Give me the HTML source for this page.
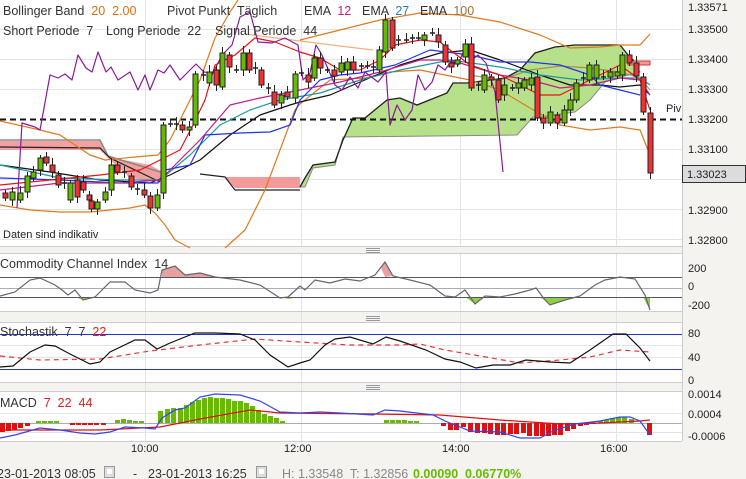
<!DOCTYPE html>
<html><head><meta charset="utf-8"><style>
html,body{margin:0;padding:0;background:#f4f3ef;width:746px;height:479px;overflow:hidden}
svg{display:block;font-family:"Liberation Sans",sans-serif}
text{white-space:pre}
</style></head><body>
<svg id="s" width="746" height="479" xmlns="http://www.w3.org/2000/svg" xml:space="preserve">
<rect x="0" y="0" width="746" height="479" fill="#f4f3ef"/>
<rect x="0" y="0" width="682" height="246" fill="#fff"/>
<rect x="0" y="254" width="682" height="57" fill="#fff"/>
<rect x="0" y="323" width="682" height="59" fill="#fff"/>
<rect x="0" y="392" width="682" height="49" fill="#fff"/>
<g stroke="#e4e4e4" stroke-width="1">
<line x1="0" y1="29.5" x2="682" y2="29.5"/><line x1="0" y1="59.5" x2="682" y2="59.5"/><line x1="0" y1="89.5" x2="682" y2="89.5"/><line x1="0" y1="149.5" x2="682" y2="149.5"/><line x1="0" y1="179.5" x2="682" y2="179.5"/><line x1="0" y1="209.5" x2="682" y2="209.5"/><line x1="0" y1="239.5" x2="682" y2="239.5"/>
<line x1="145.5" y1="0" x2="145.5" y2="246"/><line x1="301.5" y1="0" x2="301.5" y2="246"/><line x1="460.5" y1="0" x2="460.5" y2="246"/><line x1="616.5" y1="0" x2="616.5" y2="246"/>
<line x1="145.5" y1="254" x2="145.5" y2="441"/><line x1="301.5" y1="254" x2="301.5" y2="441"/><line x1="460.5" y1="254" x2="460.5" y2="441"/><line x1="616.5" y1="254" x2="616.5" y2="441"/>
<line x1="0" y1="345.5" x2="682" y2="345.5"/><line x1="0" y1="357.5" x2="682" y2="357.5"/><line x1="0" y1="413.5" x2="682" y2="413.5"/><line x1="0" y1="432.5" x2="682" y2="432.5"/>
</g>
<g stroke="#ccc"><line x1="0" y1="246.5" x2="682" y2="246.5"/><line x1="0" y1="253.5" x2="682" y2="253.5"/><line x1="0" y1="311.5" x2="682" y2="311.5"/><line x1="0" y1="322.5" x2="682" y2="322.5"/><line x1="0" y1="382.5" x2="682" y2="382.5"/><line x1="0" y1="391.5" x2="682" y2="391.5"/><line x1="0" y1="441.5" x2="682" y2="441.5"/><line x1="682.5" y1="0" x2="682.5" y2="441"/></g>
<g stroke="#999" stroke-width="1"><path d="M366 248.5h14M366 250.5h14M366 252.5h14M366 316.5h14M366 318.5h14M366 320.5h14M366 385.5h14M366 387.5h14M366 389.5h14"/></g>
<!-- clouds -->
<path d="M0 141 L100 141 L108 157 L150 165 L163 172 L163 182 L130 178 L108 158 L100 150 L0 150 Z" fill="#f4a0a0"/>
<path d="M225 177 L300 177 L300 188 L235 188 Z" fill="#f39a9a"/>
<path d="M0 140 L100 140 L108 156 L160 172" fill="none" stroke="#888" stroke-width="1.5"/>
<path d="M0 147 L100 148 L110 158 L160 182" fill="none" stroke="#222" stroke-width="1.2"/>
<path d="M200 174 L225 177 L235 190 L300 190" fill="none" stroke="#222" stroke-width="1.2"/>
<path d="M300 187 L305 178 L313 165 L335 162 L343 140 L353 118 L365 118 L387 100 L400 98 L417 105 L447 93 L453 83 L467 83 L490 80 L505 78 L520 70 L535 53 L555 47 L575 45 L600 45 L620 45 L628 55 L640 72 L628 75 L605 82 L590 100 L575 112 L540 117 L533 117 L517 135 L343 137 L335 165 L313 168 L305 187 Z" fill="#b7e08a" stroke="#888" stroke-width="1"/>
<path d="M300 187 L305 178 L313 165 L335 162 L343 140 L353 118 L365 118 L387 100 L400 98 L417 105 L447 93 L453 83 L467 83 L490 80 L505 78 L520 70 L535 53 L555 47 L575 45 L600 45 L620 45 L628 55 L635 62" fill="none" stroke="#222" stroke-width="1.3"/>
<line x1="0" y1="119.5" x2="682" y2="119.5" stroke="#111" stroke-width="2" stroke-dasharray="6,4"/>
<g fill="none" stroke-width="1.2" stroke-linejoin="round">
<polyline stroke="#e07a20" points="0,121 40,130 60,135 90,155 105,160 135,157 158,155 170,140 190,100 200,80 215,38 230,12 238,0"/>
<polyline stroke="#f0b080" points="245,34 300,41 340,46 373,50"/>
<polyline stroke="#e07a20" points="300,40 340,30 380,20 420,13 460,15 500,22 540,35 570,48 600,47 620,45 640,45 650,34"/>
<polyline stroke="#e07a20" points="0,205 30,210 60,212 90,212 110,210 130,208 145,205 155,213 165,225 175,240 190,248"/>
<polyline stroke="#e07a20" points="225,248 245,230 265,190 280,150 295,110 300,104 330,80 365,78 390,72 420,70 470,80 500,90 530,108 560,125 590,130 620,127 640,130 650,155"/>
<polyline stroke="#a07030" opacity=".7" points="470,75 500,80 530,70 560,66 590,68 620,72 640,78 650,90"/>
<polyline stroke="#111" points="0,165 50,172 100,180 150,183 170,175 200,160 230,135 260,115 290,105 300,102 330,95 360,82 400,65 440,53 470,50 500,60 540,75 570,85 600,85 620,87 640,85 650,95"/>
<polyline stroke="#1a9aa0" points="0,165 60,178 120,180 160,180 190,155 220,125 250,110 280,100 320,93 360,80 400,70 450,60 500,67 540,75 580,80 620,78 640,78 650,85"/>
<polyline stroke="#2233ee" points="0,178 60,180 120,183 158,183 165,170 190,165 205,135 240,133 270,132 290,125 300,100 320,80 340,75 360,73 395,65 430,50 470,55 500,62 530,62 560,65 590,75 600,85 620,90 640,95"/>
<polyline stroke="#c0208a" points="0,190 60,183 120,183 160,180 200,140 230,105 260,98 300,90 340,82 380,72 420,60 440,60 460,63 500,75 530,80 560,88 590,85 620,78 640,80 650,95"/>
<polyline stroke="#ee1111" points="0,185 50,180 100,175 140,170 160,160 180,150 193,125 205,100 215,65 235,55 255,38 275,42 300,52 320,58 340,70 360,70 380,60 395,45 420,40 440,42 450,50 470,65 500,75 520,85 540,95 560,95 580,85 600,75 620,65 640,80 650,110"/>
<polyline stroke="#8a1a9a" points="17,208 22,123 35,127 40,130 50,75 58,78 65,74 72,80 78,55 86,68 92,72 98,52 106,72 111,67 118,80 130,72 138,90 145,75 150,90 158,70 164,73 170,65 180,80 190,70 196,64 204,72 213,73 222,55 232,45 240,17 250,12 258,42 272,43 285,38 298,45 303,80 310,73 316,45 322,55 335,85 342,90 350,77 358,88 365,72 378,82 386,72 388,100 390,125 397,105 405,120 412,110 418,75 425,90 432,82 438,65 445,70 452,60 458,65 466,45 472,60 478,55 486,63 495,92 503,172"/>
</g>
<rect x="628" y="61" width="22" height="4" fill="#f29a9a" stroke="#d33" stroke-width="1"/>
<g id="candles"></g>
<!-- CCI -->
<path d="M162 277 L162 270 L175 266 L185 275 L200 273 L215 277Z M385 277 L381 268 L385 262 L393 276Z" fill="#e8a0a0"/>
<path d="M75 297 L83 300 L95 297Z M280 297 L288 299 L300 297Z M445 297 L455 297 L465 297 L475 304 L485 297Z M538 297 L545 300 L550 305 L565 300 L580 297Z M643 297 L650 310 L650 297Z" fill="#8fd04a"/>
<line x1="0" y1="277.5" x2="682" y2="277.5" stroke="#556" stroke-width="1"/>
<line x1="0" y1="288.5" x2="682" y2="288.5" stroke="#aab" stroke-width="1"/>
<line x1="0" y1="297.5" x2="682" y2="297.5" stroke="#556" stroke-width="1"/>
<polyline fill="none" stroke="#666" stroke-width="1.2" points="0,296 15,292 30,280 40,278 55,285 62,290 68,295 75,290 83,300 95,297 110,282 125,282 135,290 150,293 158,290 162,270 175,266 185,275 200,273 215,277 240,280 260,285 280,298 288,297 300,286 305,290 315,280 330,283 345,279 360,281 375,275 385,262 393,276 410,280 430,285 445,296 455,297 465,290 475,304 485,296 500,297 515,294 530,290 536,288 545,300 550,305 565,300 580,296 595,285 605,280 620,277 635,279 645,295 650,310"/>
<!-- Stoch -->
<line x1="0" y1="334.5" x2="682" y2="334.5" stroke="#2233dd"/>
<line x1="0" y1="369.5" x2="682" y2="369.5" stroke="#2233dd"/>
<polyline fill="none" stroke="#ee3333" stroke-width="1.2" stroke-dasharray="5,4" points="0,356 40,360 100,359 150,351 200,345 255,339 300,342 350,345 400,345 420,344 445,350 480,356 520,363 560,360 590,357 620,350 650,352"/>
<polyline fill="none" stroke="#111" stroke-width="1.2" points="0,367 13,366 30,352 45,345 55,346 70,354 90,364 100,362 110,352 135,340 145,340 157,349 170,343 195,333 215,333 240,334 255,340 270,355 288,367 300,363 310,360 325,345 335,339 350,337 373,344 386,337 400,341 426,350 445,359 460,362 476,368 493,365 510,365 526,360 550,362 570,363 590,350 613,334 626,334 640,348 650,361"/>
<!-- MACD -->
<line x1="0" y1="423.5" x2="682" y2="423.5" stroke="#aab"/>
<g id="macd"></g>
<polyline fill="none" stroke="#dd1111" stroke-width="1.3" points="0,430 100,430 160,427 200,419 250,410 280,413 373,414 440,415 500,420 560,424 600,423 640,421 650,420"/>
<polyline fill="none" stroke="#3344ee" stroke-width="1.2" points="0,438 15,435 40,428 60,430 80,433 95,434 110,432 125,427 145,428 155,429 162,418 175,410 185,408 200,397 215,394 240,395 260,401 280,412 300,413 320,412 340,413 373,415 385,410 400,411 433,415 445,421 470,431 500,432 520,438 540,438 555,430 575,424 600,421 620,417 630,417 640,421 650,435"/>
<!-- text -->
<g font-size="12.5" fill="#333">
<text x="3" y="15">Bollinger Band  <tspan fill="#e07010">20</tspan>  <tspan fill="#e07010">2.00</tspan></text>
<text x="167" y="15">Pivot Punkt  Täglich</text>
<text x="304" y="15">EMA  <tspan fill="#c0208a">12</tspan></text>
<text x="362" y="15">EMA  <tspan fill="#1a8a9a">27</tspan></text>
<text x="420" y="15">EMA  <tspan fill="#a07030">100</tspan></text>
<text x="3" y="35">Short Periode  7</text>
<text x="106" y="35">Long Periode  22</text>
<text x="215" y="35">Signal Periode  44</text>
<text x="0" y="268">Commodity Channel Index  14</text>
<text x="0" y="336">Stochastik  7  7  <tspan fill="#e02020">22</tspan></text>
<text x="0" y="407">MACD  <tspan fill="#e02020">7  22  44</tspan></text>
</g>
<text x="3" y="238" font-size="11" fill="#222">Daten sind indikativ</text>
<text x="666" y="112" font-size="11" fill="#222">Piv</text>
<g font-size="11" fill="#222">
<text x="688" y="11">1.33571</text><text x="688" y="33">1.33500</text><text x="688" y="63">1.33400</text><text x="688" y="93">1.33300</text><text x="688" y="123">1.33200</text><text x="688" y="153">1.33100</text><text x="688" y="214">1.32900</text><text x="688" y="244">1.32800</text>
<text x="688" y="272">200</text><text x="688" y="290">0</text><text x="688" y="309">-200</text>
<text x="688" y="337">80</text><text x="688" y="361">40</text><text x="688" y="384">0</text>
<text x="688" y="398">0.0014</text><text x="688" y="418">0.0004</text><text x="688" y="440">-0.0006</text>
<text x="131" y="452">10:00</text><text x="284" y="452">12:00</text><text x="442" y="452">14:00</text><text x="600" y="452">16:00</text>
</g>
<rect x="682.5" y="165.5" width="63" height="17" fill="#dcdcdc" stroke="#333"/>
<text x="687" y="178" font-size="11" fill="#222">1.33023</text>
<g font-size="12.5">
<text x="-3" y="478" fill="#333">23-01-2013 08:05</text>
<rect x="104.5" y="466.5" width="10" height="11" fill="#ddd" stroke="#999"/><rect x="107" y="469" width="5" height="5" fill="#fff"/>
<text x="133" y="478" fill="#333">-</text>
<text x="148" y="478" fill="#333">23-01-2013 16:25</text>
<rect x="256.5" y="466.5" width="10" height="11" fill="#ddd" stroke="#999"/><rect x="259" y="469" width="5" height="5" fill="#fff"/>
<text x="282" y="478" fill="#888">H: 1.33548  T: 1.32856</text>
<text x="413" y="478" fill="#66bb00" font-weight="bold">0.00090</text>
<text x="465" y="478" fill="#66bb00" font-weight="bold">0.06770%</text>
</g>
</svg>
<script>
var C=[[5,193,198],[12,200,192],[20,200,193],[27,192,176],[33,178,172],[40,170,158],[46,157,163],[52,165,172],[58,175,185],[64,183,183],[70,200,183],[77,180,197],[83,182,190],[89,195,200],[91,201,209],[97,209,202],[105,200,192],[111,190,165],[117,165,172],[124,172,172],[131,176,187],[137,189,189],[144,190,195],[150,196,208],[157,208,195],[163,193,125],[170,124,124],[176,124,124],[182,125,130],[189,130,127],[195,125,74],[203,75,75],[209,83,72],[216,70,85],[222,87,53],[229,55,67],[236,70,70],[243,70,53],[249,53,70],[255,68,68],[261,70,85],[268,88,88],[274,92,105],[281,103,95],[287,92,97],[295,98,74],[301,73,73],[308,75,82],[314,78,58],[320,58,68],[327,70,70],[334,70,76],[341,72,63],[347,70,62],[353,62,70],[361,66,66],[367,66,66],[373,67,67],[379,70,50],[385,52,20],[392,20,48],[398,40,40],[406,40,40],[412,38,38],[418,38,38],[424,40,35],[432,33,33],[438,35,42],[445,45,62],[451,63,67],[457,64,60],[465,57,44],[471,44,88],[478,85,85],[484,90,75],[491,77,80],[498,80,100],[504,95,85],[512,88,88],[518,88,83],[524,88,80],[531,85,78],[537,77,118],[543,118,123],[550,123,112],[557,115,123],[564,123,110],[570,110,100],[576,100,83],[583,78,78],[589,80,65],[596,78,65],[603,77,77],[610,77,72],[617,76,72],[622,75,55],[629,55,63],[636,63,76],[643,77,112],[650,113,173]];
var g=document.getElementById("candles"),h="";
C.forEach(function(c,i){var x=c[0],o=c[1],cl=c[2],t=Math.min(o,cl),b=Math.max(o,cl);var up=cl<o;var hi=t-3-(i*7%5),lo=b+3+(i*3%6);
h+='<line x1="'+(x+.5)+'" y1="'+hi+'" x2="'+(x+.5)+'" y2="'+lo+'" stroke="#222" stroke-width="1"/>';
if(b-t<1.5)h+='<line x1="'+(x-2)+'" y1="'+t+'" x2="'+(x+3)+'" y2="'+t+'" stroke="#222" stroke-width="1.5"/>';
else h+='<rect x="'+(x-2)+'" y="'+t+'" width="5" height="'+(b-t)+'" fill="'+(up?'#66bb00':'#ee3333')+'" stroke="#222" stroke-width="1"/>';});
g.innerHTML=h;
var m=document.getElementById("macd"),H=[];
function bar(x,v){var y=423;H.push('<rect x="'+(x-2)+'" y="'+(v<0?y+v:y)+'" width="5" height="'+Math.abs(v)+'" fill="'+(v<0?'#66bb00':'#dd1111')+'"/>');}
var d=[[2,9],[8,8],[14,7],[20,5],[27,3],[38,-2],[44,-2],[50,-2],[56,-2],[72,2],[78,2],[84,2],[90,2],[96,2],[103,2],[117,-3],[123,-4],[129,-3],[135,-2],[141,-2],[160,-12],[167,-14],[173,-15],[180,-15],[186,-18],[192,-21],[198,-23],[204,-25],[210,-26],[216,-25],[222,-25],[228,-24],[234,-22],[240,-22],[246,-20],[252,-17],[258,-13],[264,-9],[270,-7],[276,-5],[282,-2],[386,-3],[392,-3],[398,-3],[404,-3],[410,-2],[416,-2],[443,3],[450,7],[456,7],[463,4],[470,9],[477,10],[484,10],[490,11],[497,12],[503,12],[510,11],[516,11],[523,10],[529,13],[536,13],[542,13],[548,13],[554,12],[560,12],[567,8],[573,6],[580,3],[586,2],[593,1],[600,-2],[606,-3],[612,-5],[618,-6],[624,-6],[631,-4],[649,12]];
d.forEach(function(a){bar(a[0],a[1]);});m.innerHTML=H.join("");
</script>
</body></html>
